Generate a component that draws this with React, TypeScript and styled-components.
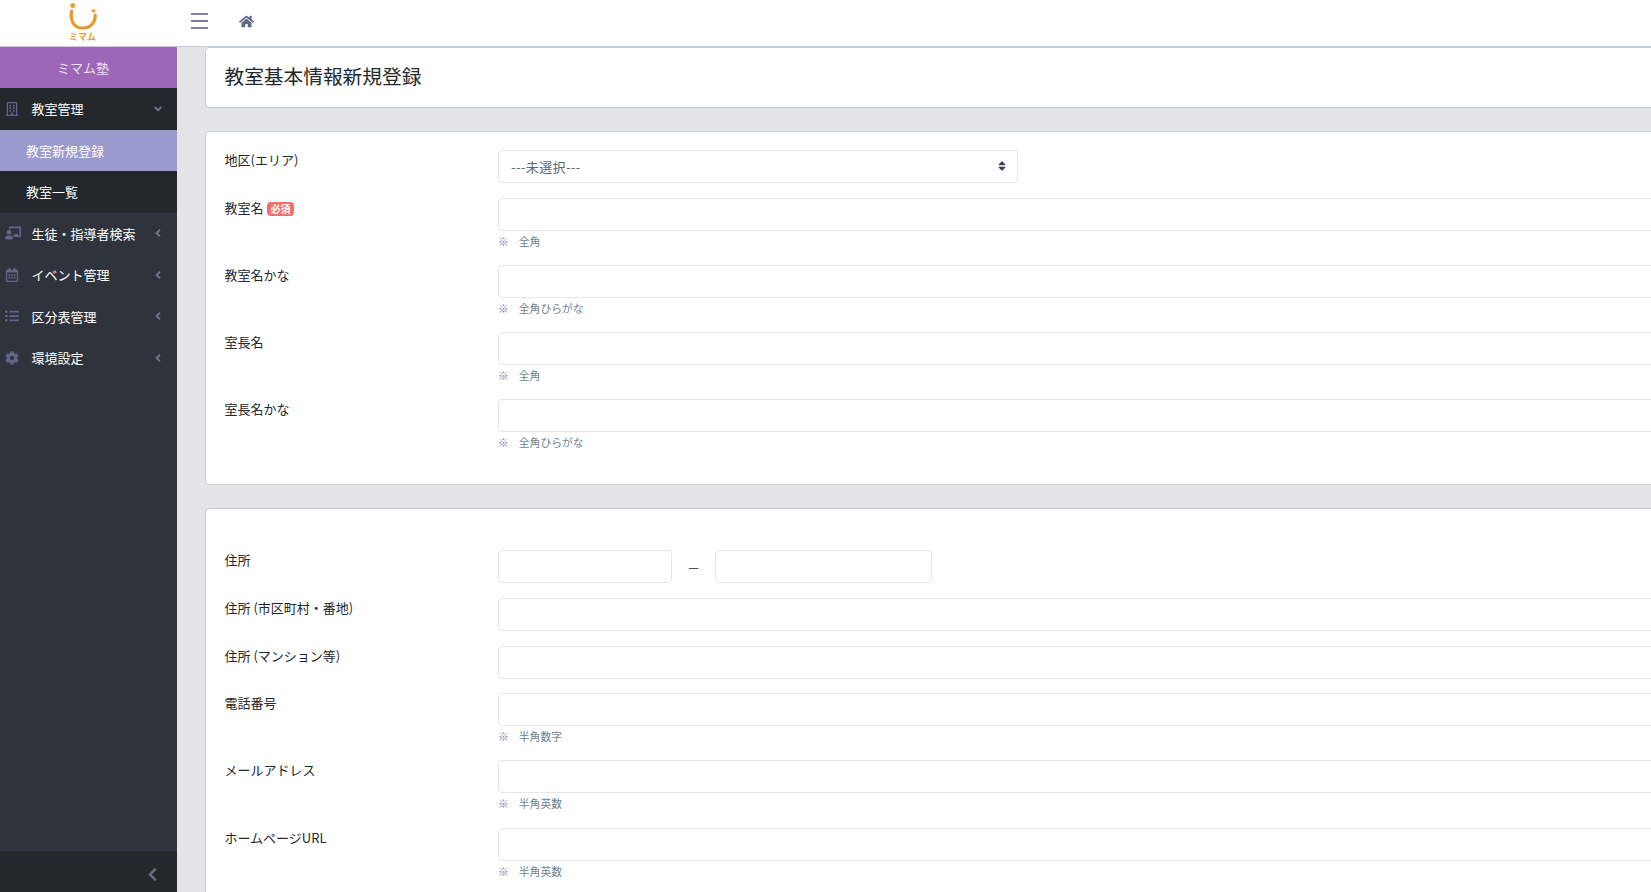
import React from "react";
import styled, { createGlobalStyle } from "styled-components";
import {
  FaRegBuilding,
  FaChalkboardTeacher,
  FaRegCalendarAlt,
  FaListUl,
  FaCog,
  FaHome,
  FaChevronLeft,
  FaAngleLeft,
  FaAngleDown,
  FaSort,
} from "react-icons/fa";

const GlobalStyle = createGlobalStyle`
  html, body {
    margin: 0;
    padding: 0;
    height: 100%;
    overflow: hidden;
    background: #e4e5e6;
  }
  * { box-sizing: border-box; }
  body {
    font-family: "Noto Sans CJK JP", "Noto Sans", sans-serif;
    font-size: 13px;
    color: #23282c;
  }
`;

const Page = styled.div`
  display: flex;
  flex-direction: column;
  height: 100vh;
  overflow: hidden;
`;

const Header = styled.header`
  display: flex;
  align-items: center;
  flex: 0 0 47px;
  padding-bottom: 4px;
  background: #fff;
  border-bottom: 1px solid #c8ced3;
`;

const LogoBox = styled.div`
  width: 177px;
  padding: 3px 12px 0 0;
  display: flex;
  flex-direction: column;
  align-items: center;
`;

const LogoText = styled.span`
  font-size: 9px;
  line-height: 10px;
  margin-top: 2px;
  font-weight: 700;
  color: #eda02e;
`;

const MenuButton = styled.button`
  display: flex;
  flex-direction: column;
  gap: 5px;
  width: 17px;
  padding: 0;
  margin-left: 14px;
  border: 0;
  background: none;
  span {
    display: block;
    height: 2px;
    background: #8080a4;
  }
`;

const HomeLink = styled.a`
  display: flex;
  margin-left: 31px;
  color: #60688a;
  font-size: 15px;
`;

const Body = styled.div`
  display: flex;
  flex: 1;
  min-height: 0;
`;

const Sidebar = styled.aside`
  flex: 0 0 177px;
  display: flex;
  flex-direction: column;
  background: #2f343c;
  color: #fff;
`;

const Brand = styled.div`
  flex: 0 0 41px;
  display: flex;
  align-items: center;
  justify-content: center;
  background: #9d66b6;
  color: #e9e0f0;
  font-size: 13px;
  padding-right: 11px;
`;

const Nav = styled.nav`
  flex: 1;
`;

const OpenGroup = styled.div`
  background: #23282c;
`;

const NavItem = styled.a`
  display: flex;
  align-items: center;
  height: 41.5px;
  padding-left: 5px;
  font-size: 13px;
  color: #fff;
`;

const NavIcon = styled.span<{ $size?: number }>`
  flex: 0 0 26.5px;
  display: flex;
  color: #62668a;
  font-size: ${({ $size }) => $size ?? 14}px;
`;

const NavLabel = styled.span`
  flex: 1;
`;

const Caret = styled.span`
  flex: 0 0 25px;
  display: flex;
  margin-left: -1px;
  color: #73788c;
  font-size: 12px;
`;

const SubItem = styled.a<{ $active?: boolean }>`
  display: flex;
  align-items: center;
  height: 41.5px;
  padding-left: 26px;
  font-size: 13px;
  color: #fff;
  background: ${({ $active }) => ($active ? "#9a9acd" : "transparent")};
`;

const SidebarFooter = styled.div`
  flex: 0 0 41px;
  display: flex;
  align-items: center;
  justify-content: flex-end;
  padding: 6px 17px 0 0;
  background: #23282c;
  color: #696c82;
  font-size: 15px;
`;

const Main = styled.main`
  flex: 1;
  min-width: 0;
  overflow: hidden;
  padding-left: 28px;
`;

const Card = styled.section`
  width: 1700px;
  background: #fff;
  border: 1px solid #c8ced3;
  border-radius: 4px;
  margin-bottom: 23px;
`;

const TitleCard = styled(Card)`
  height: 61px;
  display: flex;
  align-items: center;
  padding: 0 0 4px 18.5px;
`;

const Title = styled.h1`
  margin: 0;
  font-size: 19.7px;
  font-weight: 400;
  color: #23282c;
`;

const FormCard = styled(Card)<{ $top?: number }>`
  padding: ${({ $top }) => $top ?? 18}px 19px 18px 18.5px;
`;

const Row = styled.div`
  display: grid;
  grid-template-columns: 273.5px 1fr;
  margin-bottom: 14.6px;
`;

const Label = styled.label`
  display: flex;
  align-items: flex-start;
  font-size: 13px;
  line-height: 20px;
  color: #23282c;
`;

const Badge = styled.span`
  display: inline-block;
  height: 14px;
  margin: 4px 0 0 3.5px;
  padding: 0 3.5px;
  border-radius: 4px;
  background: #f86c6b;
  color: #fff;
  font-size: 10px;
  font-weight: 700;
  line-height: 14px;
`;

const Input = styled.input`
  display: block;
  width: 100%;
  height: 33px;
  border: 1px solid #e4e7ea;
  border-radius: 4px;
  background: #fff;
  padding: 0 12px;
  outline: none;
`;

const SelectWrap = styled.div`
  position: relative;
  width: 520px;
`;

const Select = styled.select`
  display: block;
  width: 100%;
  height: 33px;
  appearance: none;
  border: 1px solid #e4e7ea;
  border-radius: 4px;
  background: #fff;
  padding: 0 12px;
  font-family: inherit;
  font-size: 13px;
  letter-spacing: 0.4px;
  color: #5c6873;
`;

const SelectArrow = styled.span`
  position: absolute;
  top: 10px;
  right: 10px;
  display: flex;
  font-size: 12px;
  color: #3d4258;
`;

const Hint = styled.small`
  display: flex;
  gap: 10px;
  height: 19.6px;
  font-size: 10.8px;
  line-height: 21px;
  color: #73818f;
`;

const ZipRow = styled.div`
  display: flex;
  align-items: center;
`;

const ZipInput = styled(Input)<{ $w: number }>`
  width: ${({ $w }) => $w}px;
`;

const ZipDash = styled.span`
  flex: 0 0 43px;
  text-align: center;
  font-size: 12px;
  line-height: 20px;
`;

const Logo = () => (
  <svg width="30" height="27" viewBox="0 0 30 27">
    <circle cx="4.8" cy="2.6" r="2.5" fill="#e9a53c" />
    <circle cx="25.5" cy="7.8" r="1.9" fill="#e9a53c" />
    <path
      d="M3.6 8 C1.8 17.5 6 25 14.5 25 C22.5 25 27.5 19.5 27.2 12"
      fill="none"
      stroke="#e89b2c"
      strokeWidth="3.2"
      strokeLinecap="round"
    />
  </svg>
);

type Field = { label: string; hint?: string; required?: boolean };

const basicFields: Field[] = [
  { label: "教室名", hint: "全角", required: true },
  { label: "教室名かな", hint: "全角ひらがな" },
  { label: "室長名", hint: "全角" },
  { label: "室長名かな", hint: "全角ひらがな" },
];

const addressFields: Field[] = [
  { label: "住所 (市区町村・番地)" },
  { label: "住所 (マンション等)" },
  { label: "電話番号", hint: "半角数字" },
  { label: "メールアドレス", hint: "半角英数" },
  { label: "ホームページURL", hint: "半角英数" },
];

const FieldRow = ({ label, hint, required }: Field) => (
  <Row>
    <Label>
      {label}
      {required && <Badge>必須</Badge>}
    </Label>
    <div>
      <Input type="text" />
      {hint && (
        <Hint>
          <span>※</span>
          <span>{hint}</span>
        </Hint>
      )}
    </div>
  </Row>
);

const closedMenus = [
  { label: "生徒・指導者検索", icon: <FaChalkboardTeacher />, size: 16 },
  { label: "イベント管理", icon: <FaRegCalendarAlt /> },
  { label: "区分表管理", icon: <FaListUl /> },
  { label: "環境設定", icon: <FaCog /> },
];

const App: React.FC = () => {
  return (
    <Page>
      <GlobalStyle />
      <Header>
        <LogoBox>
          <Logo />
          <LogoText>ミマム</LogoText>
        </LogoBox>
        <MenuButton aria-label="menu">
          <span />
          <span />
          <span />
        </MenuButton>
        <HomeLink>
          <FaHome />
        </HomeLink>
      </Header>
      <Body>
        <Sidebar>
          <Brand>ミマム塾</Brand>
          <Nav>
            <OpenGroup>
              <NavItem>
                <NavIcon>
                  <FaRegBuilding />
                </NavIcon>
                <NavLabel>教室管理</NavLabel>
                <Caret>
                  <FaAngleDown />
                </Caret>
              </NavItem>
              <SubItem $active>教室新規登録</SubItem>
              <SubItem>教室一覧</SubItem>
            </OpenGroup>
            {closedMenus.map((m) => (
              <NavItem key={m.label}>
                <NavIcon $size={m.size}>{m.icon}</NavIcon>
                <NavLabel>{m.label}</NavLabel>
                <Caret>
                  <FaAngleLeft />
                </Caret>
              </NavItem>
            ))}
          </Nav>
          <SidebarFooter>
            <FaChevronLeft />
          </SidebarFooter>
        </Sidebar>
        <Main>
          <TitleCard>
            <Title>教室基本情報新規登録</Title>
          </TitleCard>
          <FormCard>
            <Row>
              <Label>地区(エリア)</Label>
              <SelectWrap>
                <Select defaultValue="">
                  <option value="">---未選択---</option>
                </Select>
                <SelectArrow>
                  <FaSort />
                </SelectArrow>
              </SelectWrap>
            </Row>
            {basicFields.map((f) => (
              <FieldRow key={f.label} {...f} />
            ))}
          </FormCard>
          <FormCard $top={41}>
            <Row>
              <Label>住所</Label>
              <ZipRow>
                <ZipInput type="text" $w={174} />
                <ZipDash>—</ZipDash>
                <ZipInput type="text" $w={217} />
              </ZipRow>
            </Row>
            {addressFields.map((f) => (
              <FieldRow key={f.label} {...f} />
            ))}
          </FormCard>
        </Main>
      </Body>
    </Page>
  );
};

export default App;
